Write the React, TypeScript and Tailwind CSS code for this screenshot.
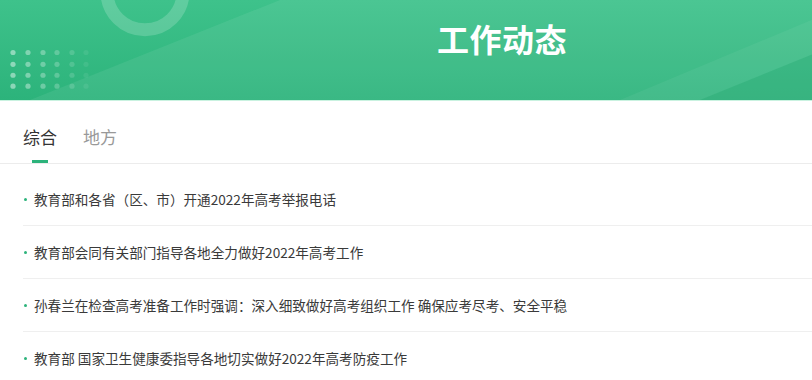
import React, { useState } from 'react';

const NEWS = [
    '教育部和各省（区、市）开通2022年高考举报电话',
    '教育部会同有关部门指导各地全力做好2022年高考工作',
    '孙春兰在检查高考准备工作时强调：深入细致做好高考组织工作 确保应考尽考、安全平稳',
    '教育部 国家卫生健康委指导各地切实做好2022年高考防疫工作',
]

const TABS = ['综合', '地方']

// header background decorations
const Decor = () => {
    const cols = [13, 28, 43, 57, 72, 86]
    const rows = [53, 65, 76, 87]
    return (
        <svg className="absolute inset-0 w-full h-full" viewBox="0 0 812 101" preserveAspectRatio="none">
            <polygon points="30,101 280,0 812,0 812,101" fill="#ffffff" opacity="0.07" />
            <polygon points="620,101 812,20 812,101" fill="#ffffff" opacity="0.05" />
            <polygon points="700,101 812,55 812,101" fill="#1fa56d" opacity="0.35" />
            <circle cx="145" cy="-8" r="38" fill="none" stroke="#ffffff" strokeWidth="13" opacity="0.18" />
            {rows.map((y) =>
                cols.map((x, i) => (
                    <circle key={`${x}-${y}`} cx={x} cy={y} r="2.6" fill="#ffffff" opacity={0.45 - i * 0.075} />
                ))
            )}
        </svg>
    )
}

const App = () => {
    const [active, setActive] = useState(0)

    return (
        <div className="w-[812px] h-[380px] overflow-hidden bg-white" style={{ fontFamily: '"Noto Sans CJK SC", "Noto Sans", sans-serif' }}>
            {/* banner */}
            <div className="relative h-[101px] bg-gradient-to-b from-[#3ec28b] to-[#2cb37b] border-b border-[#c9f2e0]">
                <Decor />
                <div className="relative pl-[437px] pt-[16px]">
                    <h1 className="text-[32px] leading-[44px] font-bold text-white tracking-[0.5px]">工作动态</h1>
                </div>
            </div>

            {/* tabs */}
            <div className="flex gap-[26px] pl-[23px] h-[63px] border-b border-[#ececec]">
                {TABS.map((tab, i) => (
                    <button
                        key={tab}
                        onClick={() => setActive(i)}
                        className={`relative pt-[23px] text-[17px] leading-[26px] self-start ${active === i ? 'text-[#333333]' : 'text-[#999999]'}`}
                    >
                        {tab}
                    </button>
                ))}
            </div>
            <div className="relative h-0">
                <span className="absolute top-[-4px] w-[16px] h-[3px] bg-[#2cb37b]" style={{ left: 32 + active * 60 }} />
            </div>

            {/* list */}
            <ul className="pl-[23px] pt-[9px]">
                {NEWS.map((item) => (
                    <li key={item} className="flex items-center h-[53px] border-b border-[#efefef] text-[13.6px] text-[#3a3a3a]">
                        <span className="w-[3px] h-[3px] rounded-full bg-[#2cb37b] mr-[7px] ml-[1px]" />
                        {item}
                    </li>
                ))}
            </ul>
        </div>
    );
};

export default App;
